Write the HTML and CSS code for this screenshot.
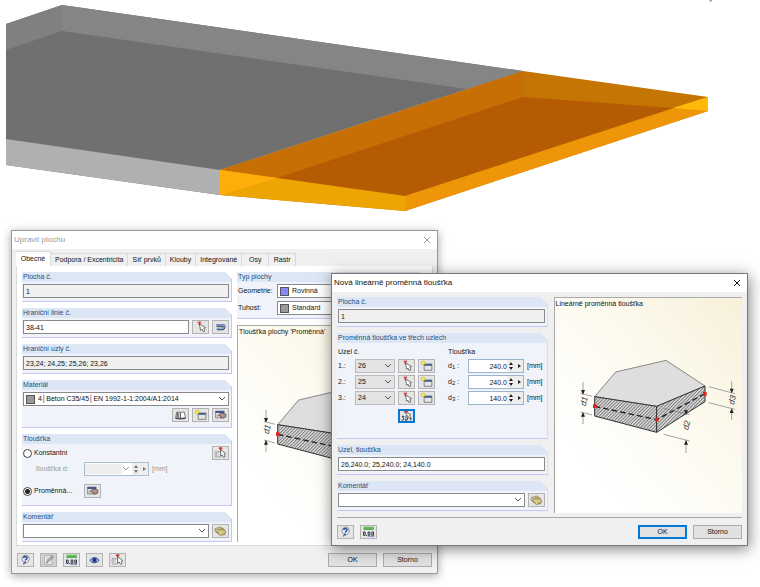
FILE: index.html
```html
<!DOCTYPE html>
<html lang="cs">
<head>
<meta charset="utf-8">
<meta name="viewport" content="width=device-width, initial-scale=1">
<title>Upravit plochu</title>
<link rel="stylesheet" href="styles.css">
</head>
<body>
<svg class="defs" aria-hidden="true">
  <defs>
    <pattern id="hatch" width="7" height="7" patternUnits="userSpaceOnUse" patternTransform="rotate(45)">
      <rect width="7" height="7" fill="#e2e2e2"/><rect width="3" height="7" fill="#777"/>
    </pattern>
    <symbol id="i-pick" viewBox="0 0 48 42">
      <path d="M15 7l11 2M17 13l9-8M20 4l2 12" stroke="#d23b36" stroke-width="3"/>
      <path d="M21 12l3 19 4-4 4 8 5-2-3-8 5-2z" fill="#fff" stroke="#333" stroke-width="2"/>
    </symbol>
    <symbol id="i-line" viewBox="0 0 48 42">
      <path d="M12 16h15q9 0 8 5-1 6-8 6H13" fill="none" stroke="#33405f" stroke-width="8"/>
      <path d="M12 15h15q9 0 8 5-1 6-8 6H13" fill="none" stroke="#90a8e2" stroke-width="4"/>
    </symbol>
    <symbol id="i-book" viewBox="0 0 48 42">
      <path d="M9 29l4-17 10 1v18zM39 29l-4-17-11 1v18z" fill="#fff" stroke="#444" stroke-width="2"/>
      <path d="M13 13l6 1v15l-8-2z" fill="#6d6d74"/>
      <path d="M9 31l15 2 15-2" fill="none" stroke="#333" stroke-width="3"/>
    </symbol>
    <symbol id="i-new" viewBox="0 0 48 42">
      <path d="M17 15h23v19H17z" fill="#e6e6e6" stroke="#555" stroke-width="2"/>
      <path d="M17 15h23v5H17z" fill="#415a8c"/>
      <path d="M14 5v14M7 12h14M9 7l10 10M19 7L9 17" stroke="#c9b90d" stroke-width="3"/>
      <circle cx="14" cy="12" r="4" fill="#f8ef36"/>
    </symbol>
    <symbol id="i-edit" viewBox="0 0 48 42">
      <path d="M9 9h26v21H9z" fill="#dadce2" stroke="#737783" stroke-width="2"/>
      <path d="M9 9h26v6H9z" fill="#415a8c"/>
      <path d="M12 22h8M12 27h7" stroke="#778" stroke-width="2"/>
      <path d="M19 20l7-4 14 2v9l-9 3-8-2 4-3-7-2z" fill="#bd9585" stroke="#4c3934" stroke-width="2"/>
    </symbol>
    <symbol id="i-from" viewBox="0 0 48 42">
      <path d="M8 17h16v16H8z" fill="#f5f5f5" stroke="#888" stroke-width="2"/>
      <path d="M12 18v14M17 18v14" stroke="#999" stroke-width="2"/>
      <path d="M19 8l11-2M22 4l4 9" stroke="#d23b36" stroke-width="4"/>
      <path d="M24 11l1 20 4-4 4 7 5-2-3-7 5-2z" fill="#fff" stroke="#333" stroke-width="2"/>
    </symbol>
    <symbol id="i-three" viewBox="0 0 48 42">
      <path d="M17 9l12-3M21 4l4 10" stroke="#d23b36" stroke-width="4"/>
      <path d="M10 22h6l-3 5q4 1 2 5-2 3-6 1M20 25l4-2 3 3-1 7-5 1-1-5M37 24v10" fill="none" stroke="#333" stroke-width="3"/>
      <path d="M22 10l3 12 3-2 4 9 5-2-4-8 4-2z" fill="#fff" stroke="#444" stroke-width="2"/>
    </symbol>
    <symbol id="i-comment" viewBox="0 0 48 42">
      <path d="M8 14l16-5 11 7-3 10-15 2-9-6z" fill="#d6cb98" stroke="#756b3e" stroke-width="2"/>
      <path d="M14 18l14-4 11 7-2 11-14 2-9-7z" fill="#c8b978" stroke="#716537" stroke-width="2"/>
      <path d="M14 19l10 7 14-4M24 26v7" fill="none" stroke="#f1e9bd" stroke-width="2"/>
    </symbol>
    <symbol id="i-help" viewBox="0 0 48 42">
      <path d="M17 9q8-6 15 0 7 9 0 17l-5 3-10 5 3-6q-11-8-3-19z" fill="#f7f8fd" stroke="#555b6c" stroke-width="2"/>
      <path d="M18 15q1-5 6-4 7 1 3 7l-4 4" fill="none" stroke="#31549a" stroke-width="5"/>
      <circle cx="22" cy="28" r="3" fill="#31549a"/>
    </symbol>
    <symbol id="i-note" viewBox="0 0 48 42">
      <path d="M12 8h22v26H12z" fill="#f4f4f4" stroke="#9b9b9b" stroke-width="2"/>
      <path d="M16 14h12M16 19h8" stroke="#aaa" stroke-width="2"/>
      <path d="M17 31l3-8L34 8l5 4-15 15z" fill="#aaa" stroke="#777" stroke-width="2"/>
    </symbol>
    <symbol id="i-units" viewBox="0 0 48 42">
      <path d="M9 5h31v9H9z" fill="#64bd5c"/><path d="M9 13h31" stroke="#3c8b3a" stroke-width="2"/>
      <path d="M9 21h5v10H9zM18 30v3M23 21h5v10h-5zM34 21h5v10h-5z" fill="none" stroke="#353a4a" stroke-width="3"/>
      <path d="M21 34h20" stroke="#4c68ad" stroke-width="2"/>
    </symbol>
    <symbol id="i-eye" viewBox="0 0 48 42">
      <path d="M10 22q14-17 28 0-14 15-28 0z" fill="#c8d6f6" stroke="#344678" stroke-width="3"/>
      <circle cx="24" cy="21" r="7" fill="#2449b4"/><circle cx="24" cy="21" r="3" fill="#101d50"/>
    </symbol>
    <symbol id="i-close" viewBox="0 0 8 8"><path d="M1 1l6 6M7 1L1 7" stroke="currentColor" fill="none"/></symbol>
    <symbol id="i-chev" viewBox="0 0 8 6"><path d="M1 1l3 3 3-3" stroke="#555" fill="none"/></symbol>
    <symbol id="i-updown" viewBox="0 0 8 12"><path d="M4 2l2 3H2zM4 10l2-3H2z" fill="#222"/></symbol>
    <symbol id="i-right" viewBox="0 0 8 12"><path d="M3 4l3 2-3 2z" fill="#222"/></symbol>
    <symbol id="slab" viewBox="5 5 564 645">
      <path d="M124 301l63-74 151-35 117 77-145 61z" fill="#dededf" stroke="#888" stroke-width="3"/>
      <path d="M124 301l186 29v78l-186-49z" fill="url(#hatch)" stroke="#333" stroke-width="3"/>
      <path d="M310 330l145-61v47l-145 92z" fill="url(#hatch)" stroke="#333" stroke-width="3"/>
      <path d="M124 330l186 40 145-78" fill="none" stroke="#222" stroke-width="4" stroke-dasharray="17 9"/>
      <g stroke="#777" stroke-width="2">
        <path d="M82 291l34 9M82 347l34 9M89 257v35M89 350v33"/>
        <path d="M466 271l79 21M466 319l79 20M535 255v34M535 338v32"/>
        <path d="M331 336l78 19M331 414l78 20M398 338v15M398 434v36"/>
      </g>
      <path d="M89 295l-6-14h12zM89 347l-6 14h12zM535 291l-6-14h12zM535 336l-6 14h12zM398 356l-6-14h12zM398 431l-6 14h12z" fill="#222"/>
      <g fill="#e3231c"><path d="M119 324h11v11h-11zM305 364h11v11h-11zM449 287h11v11h-11z"/></g>
      <g class="dim">
        <text transform="translate(97 330) rotate(-78)">d1</text>
        <text transform="translate(405 402) rotate(-78)">d2</text>
        <text transform="translate(542 326) rotate(-78)">d3</text>
      </g>
    </symbol>
  </defs>
</svg>

<main class="desktop">
  <svg class="model" viewBox="0 0 760 220" role="img" aria-label="Model desky">
    <path d="M6 24L62 5l461 66-303 99v25L6 165z" fill="#707070"/>
    <path d="M220 170l303-99 185 26v14l-303 100-185-16z" fill="#c47504"/>
    <path d="M6 24L62 5v26L6 50z" fill="#808080"/>
    <path d="M62 5l461 66-56 18L62 31z" fill="#858585"/>
    <path d="M6 139l214 31v25L6 165z" fill="#b0b0b0"/>
    <path d="M220 170L523 71v26L277 178z" fill="#c76e04"/>
    <path d="M523 97l150 11-268 88-128-18z" fill="#b45b04"/>
    <path d="M220 170l185 26v15l-185-16z" fill="#eda503"/>
    <path d="M220 170l57 8-57 17z" fill="#ffad08"/>
    <path d="M405 196l303-99v14l-303 100z" fill="#ee9607"/>
    <path d="M673 108l35-11v14z" fill="#ffb908"/>
    <path d="M709 0h2v2" fill="none" stroke="#777"/>
  </svg>

  <section class="window surface" aria-label="Upravit plochu">
    <header class="titlebar inactive"><h1>Upravit plochu</h1><button class="close" aria-label="Zavřít"><svg><use href="#i-close"/></svg></button></header>
    <nav class="tabs">
      <button class="tab active">Obecné</button><button class="tab">Podpora / Excentricita</button><button class="tab">Síť prvků</button><button class="tab">Klouby</button><button class="tab">Integrované</button><button class="tab">Osy</button><button class="tab">Rastr</button>
    </nav>
    <div class="page">
      <div class="column">
        <section class="group">
          <h2><label for="s-no">Plocha č.</label></h2>
          <div class="body"><div class="row"><input id="s-no" class="field" value="1" readonly></div></div>
        </section>
        <section class="group">
          <h2><label for="s-lines">Hraniční linie č.</label></h2>
          <div class="body"><div class="row"><input id="s-lines" class="field" value="38-41">
            <button class="tool" aria-label="Vybrat linie"><svg><use href="#i-pick"/></svg></button>
            <button class="tool" aria-label="Obrátit linie"><svg><use href="#i-line"/></svg></button></div></div>
        </section>
        <section class="group">
          <h2><label for="s-nodes">Hraniční uzly č.</label></h2>
          <div class="body"><div class="row"><input id="s-nodes" class="field" value="23,24; 24,25; 25,26; 23,26" readonly></div></div>
        </section>
        <section class="group material">
          <h2><label for="s-mat">Materiál</label></h2>
          <div class="body">
            <div class="row"><span class="combo"><i class="swatch gray"></i><select id="s-mat"><option>4│Beton C35/45│EN 1992-1-1:2004/A1:2014</option></select><svg class="chev"><use href="#i-chev"/></svg></span></div>
            <div class="row end">
              <button class="tool" aria-label="Knihovna"><svg><use href="#i-book"/></svg></button>
              <button class="tool" aria-label="Nový materiál"><svg><use href="#i-new"/></svg></button>
              <button class="tool" aria-label="Upravit materiál"><svg><use href="#i-edit"/></svg></button>
            </div>
          </div>
        </section>
        <section class="group thickness">
          <h2>Tloušťka</h2>
          <div class="body">
            <div class="row spread"><label class="choice"><input type="radio" name="thick">Konstantní</label>
              <button class="tool" aria-label="Převzít tloušťku"><svg><use href="#i-from"/></svg></button></div>
            <div class="row const"><label class="muted" for="s-d">tloušťka d:</label>
              <span class="spin off"><input id="s-d" disabled><svg class="chev"><use href="#i-chev"/></svg><button class="step" disabled aria-label="Krok"><svg><use href="#i-updown"/></svg></button><button class="step" disabled aria-label="Další"><svg><use href="#i-right"/></svg></button></span>
              <span class="muted">[mm]</span></div>
            <div class="row variable"><label class="choice"><input type="radio" name="thick" checked>Proměnná...</label>
              <button class="tool" aria-label="Upravit proměnnou tloušťku"><svg><use href="#i-edit"/></svg></button></div>
          </div>
        </section>
        <section class="group">
          <h2><label for="s-com">Komentář</label></h2>
          <div class="body"><div class="row"><span class="combo"><select id="s-com"><option></option></select><svg class="chev"><use href="#i-chev"/></svg></span>
            <button class="tool" aria-label="Vybrat komentář"><svg><use href="#i-comment"/></svg></button></div></div>
        </section>
      </div>
      <div class="column">
        <section class="group">
          <h2>Typ plochy</h2>
          <div class="body pairs">
            <label for="s-geo">Geometrie:</label><span class="combo"><i class="swatch blue"></i><select id="s-geo"><option>Rovinná</option></select></span>
            <label for="s-stiff">Tuhost:</label><span class="combo"><i class="swatch gray"></i><select id="s-stiff"><option>Standard</option></select></span>
          </div>
        </section>
        <figure class="preview"><figcaption>Tloušťka plochy 'Proměnná'</figcaption><svg><use href="#slab"/></svg></figure>
      </div>
    </div>
    <footer class="actions">
      <button class="tool" aria-label="Nápověda"><svg><use href="#i-help"/></svg></button>
      <button class="tool dim-tool" aria-label="Poznámka"><svg><use href="#i-note"/></svg></button>
      <button class="tool" aria-label="Jednotky"><svg><use href="#i-units"/></svg></button>
      <button class="tool" aria-label="Zobrazit"><svg><use href="#i-eye"/></svg></button>
      <button class="tool" aria-label="Převzít"><svg><use href="#i-from"/></svg></button>
      <span class="fill"></span>
      <button class="push">OK</button><button class="push">Storno</button>
    </footer>
  </section>

  <section class="window variable-dialog" aria-label="Nová lineárně proměnná tloušťka">
    <header class="titlebar"><h1>Nová lineárně proměnná tloušťka</h1><button class="close" aria-label="Zavřít"><svg><use href="#i-close"/></svg></button></header>
    <div class="page">
      <div class="column">
        <section class="group">
          <h2><label for="v-no">Plocha č.</label></h2>
          <div class="body"><div class="row"><input id="v-no" class="field" value="1" readonly></div></div>
        </section>
        <section class="group nodes">
          <h2>Proměnná tloušťka ve třech uzlech</h2>
          <div class="body node-grid">
            <span class="wide">Uzel č.</span><span class="head">Tloušťka</span>

            <label for="n1">1.:</label><span class="combo flat"><select id="n1"><option>26</option></select><svg class="chev"><use href="#i-chev"/></svg></span>
            <button class="tool" aria-label="Vybrat uzel 1"><svg><use href="#i-pick"/></svg></button><button class="tool" aria-label="Nový uzel 1"><svg><use href="#i-new"/></svg></button>
            <label class="dl" for="d1">d<sub>1</sub> :</label><span class="spin"><input id="d1" value="240.0"><button class="step" aria-label="Krok 1"><svg><use href="#i-updown"/></svg></button><button class="step" aria-label="Další 1"><svg><use href="#i-right"/></svg></button></span><span>[mm]</span>

            <label for="n2">2.:</label><span class="combo flat"><select id="n2"><option>25</option></select><svg class="chev"><use href="#i-chev"/></svg></span>
            <button class="tool" aria-label="Vybrat uzel 2"><svg><use href="#i-pick"/></svg></button><button class="tool" aria-label="Nový uzel 2"><svg><use href="#i-new"/></svg></button>
            <label class="dl" for="d2">d<sub>2</sub> :</label><span class="spin"><input id="d2" value="240.0"><button class="step" aria-label="Krok 2"><svg><use href="#i-updown"/></svg></button><button class="step" aria-label="Další 2"><svg><use href="#i-right"/></svg></button></span><span>[mm]</span>

            <label for="n3">3.:</label><span class="combo flat"><select id="n3"><option>24</option></select><svg class="chev"><use href="#i-chev"/></svg></span>
            <button class="tool" aria-label="Vybrat uzel 3"><svg><use href="#i-pick"/></svg></button><button class="tool" aria-label="Nový uzel 3"><svg><use href="#i-new"/></svg></button>
            <label class="dl" for="d3">d<sub>3</sub> :</label><span class="spin"><input id="d3" value="140.0"><button class="step" aria-label="Krok 3"><svg><use href="#i-updown"/></svg></button><button class="step" aria-label="Další 3"><svg><use href="#i-right"/></svg></button></span><span>[mm]</span>

            <button class="tool focus" aria-label="Vybrat tři uzly"><svg><use href="#i-three"/></svg></button>
          </div>
        </section>
        <section class="group">
          <h2><label for="v-list">Uzel, tloušťka</label></h2>
          <div class="body"><div class="row"><input id="v-list" class="field" value="26,240.0; 25,240.0; 24,140.0"></div></div>
        </section>
        <section class="group">
          <h2><label for="v-com">Komentář</label></h2>
          <div class="body"><div class="row"><span class="combo"><select id="v-com"><option></option></select><svg class="chev"><use href="#i-chev"/></svg></span>
            <button class="tool" aria-label="Vybrat komentář"><svg><use href="#i-comment"/></svg></button></div></div>
        </section>
      </div>
      <div class="column">
        <figure class="preview"><figcaption>Lineárně proměnná tloušťka</figcaption><svg><use href="#slab"/></svg></figure>
      </div>
    </div>
    <footer class="actions">
      <button class="tool" aria-label="Nápověda"><svg><use href="#i-help"/></svg></button>
      <button class="tool" aria-label="Jednotky"><svg><use href="#i-units"/></svg></button>
      <span class="fill"></span>
      <button class="push default">OK</button><button class="push">Storno</button>
    </footer>
  </section>
</main>
</body>
</html>
```
FILE: styles.css
```css
* { box-sizing: border-box; }
body { margin: 0; background: #fff; color: #111; font: 7px/10px "Liberation Sans", sans-serif; }
button, input, select { font: inherit; color: inherit; margin: 0; padding: 0; border-radius: 0; min-width: 0; }
button svg { display: block; }
h1, h2, figure { margin: 0; font: inherit; }
.defs { position: absolute; width: 0; height: 0; }

.desktop { position: relative; min-height: 100vh; overflow: hidden; }
.model { display: block; width: 100%; }

.window { position: absolute; border: 1px solid #999; background: #f0f0f0; box-shadow: 0 2px 9px rgba(0, 0, 0, .35); }
.surface { left: 11px; right: 322px; top: 230px; }
.variable-dialog { left: 331px; right: 12px; top: 273px; border-color: #777; box-shadow: 1px 3px 14px rgba(0, 0, 0, .5); }

.titlebar { display: flex; align-items: center; justify-content: space-between; height: 18px; padding: 0 6px 0 2px; background: #fff; font: 8px/10px "Liberation Sans", sans-serif; }
.inactive { color: #999; }
.close { width: 8px; height: 8px; border: 0; background: none; }
.close svg { width: 8px; height: 8px; }

.tabs { display: flex; align-items: flex-end; height: 17px; padding-left: 4px; }
.tab { height: 13px; min-width: 27px; padding: 0 4px; border: 1px solid #d9d9d9; border-width: 1px 1px 0 0; background: #f0f0f0; }
.tab.active { height: 15px; min-width: 35px; background: #fff; }

.page { display: grid; grid-template-columns: 210fr 190fr; gap: 5px; }
.surface .page { margin: 0 4px; padding: 6px 5px 3px; border: 1px solid #dcdcdc; border-top: 0; background: #fff; }
.variable-dialog .page { grid-template-columns: 210fr 188fr; gap: 6px; margin: 0 5px; padding: 5px 0 4px; border-bottom: 1px solid #a8a8a8; }
.column { display: flex; flex-direction: column; gap: 6px; min-width: 0; }

.group { border: solid #c6c6f2; border-width: 0 1px 1px 0; background: linear-gradient(#dce6f4, #dce6f4) 0 0 / 100% 10px no-repeat, #f0f4fa; clip-path: polygon(0 0, calc(100% - 7px) 0, 100% 7px, 100% 100%, 0 100%); }
.group h2 { height: 10px; padding-left: 1px; color: #234f80; }
.body { display: flex; flex-direction: column; gap: 2px; padding: 2px 2px 3px 1px; }
.row { display: flex; align-items: center; gap: 3px; }
.end { justify-content: flex-end; }
.spread { justify-content: space-between; }

.field { flex: 1; width: 100%; height: 14px; padding: 0 2px; border: 1px solid #8a8a8a; background: #fff; }
.field:read-only { background: #f0f0f0; }
.combo { position: relative; display: flex; align-items: center; flex: 1; gap: 3px; height: 14px; padding-left: 2px; border: 1px solid #8a8a8a; background: #fff; }
.combo select { flex: 1; height: 12px; border: 0; background: none; appearance: none; }
.combo.flat { border-color: #bbb; background: #e3e3e3; }
.chev { flex: none; width: 8px; height: 6px; margin-right: 2px; }
.swatch { flex: none; width: 9px; height: 9px; border: 1px solid #555; }
.gray { background: #999; }
.blue { background: #8888f8; }

.tool { flex: none; width: 17px; height: 14px; border: 1px solid #b3b3b3; background: #e5e5e5; }
.tool svg { width: 17px; height: 14px; margin: -1px; }
.dim-tool { background: #d0d0d0; }
.focus { border: 1px solid #0078d7; outline: 1px solid #0078d7; outline-offset: -2px; }

.material { min-height: 48px; }
.thickness { min-height: 72px; }
.choice { display: flex; align-items: center; gap: 2px; }
.choice input { width: 9px; height: 9px; appearance: none; border: 1px solid #444; border-radius: 50%; background: #fff; }
.choice input:checked { background: radial-gradient(circle, #222 2px, #fff 3px); }
.muted { color: #999; }
.const { padding-left: 13px; }
.const label { width: 45px; }
.variable { padding-top: 6px; }
.variable .choice { width: 58px; }

.spin { display: flex; align-items: center; height: 14px; border: 1px solid #9ab5cc; background: #fff; }
.spin input { flex: 1; width: 36px; height: 12px; border: 0; background: none; text-align: right; }
.spin.off { width: 65px; border-color: #a9bfd3; }
.spin.off input { width: 30px; height: 10px; background: #eee; }
.spin.off svg { opacity: .6; }
.step { width: 8px; height: 12px; border: 0; background: #eee; }
.step svg { width: 8px; height: 12px; }

.pairs { display: grid; grid-template-columns: 36px 1fr; align-items: center; gap: 3px; }

.nodes { min-height: 106px; }
.node-grid { display: grid; grid-template-columns: 14px 40px 17px 17px 27px 56px 1fr; align-items: center; gap: 2px 3px; padding-top: 4px; }
.wide { grid-column: 1 / 5; }
.head { grid-column: 5 / 8; padding-left: 10px; }
.dl { padding-left: 10px; white-space: nowrap; }
.dl sub { font-size: 6px; line-height: 1px; vertical-align: -1px; }
.node-grid .focus { grid-column: 3; margin-top: 2px; }

.preview { position: relative; flex: 1; min-height: 215px; overflow: hidden; border: 1px solid #aaa; border-width: 1px 0 0 1px; background: linear-gradient(to top right, #fff 20%, #fdfaf0 55%, #f7f1da); }
.preview figcaption { position: absolute; left: 1px; top: 1px; }
.preview svg { display: block; width: 188px; height: 215px; }
.dim { font: italic 25px "Liberation Sans", sans-serif; fill: #333; }

.actions { display: flex; gap: 6px; padding: 7px 5px 6px; }
.fill { flex: 1; }
.push { width: 49px; height: 14px; border: 1px solid #adadad; background: #e1e1e1; }
.push + .push { margin-right: 0; }
.default { border: 2px solid #0078d7; }
```
